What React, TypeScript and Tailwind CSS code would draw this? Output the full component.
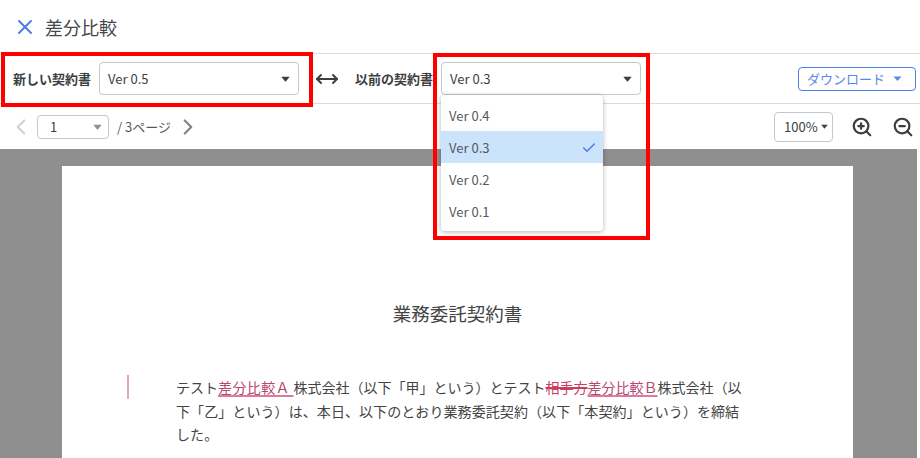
import { ChevronLeft, ChevronRight, MoveHorizontal, X, ZoomIn, ZoomOut, Check } from 'lucide-react';

const Caret = ({ className }: { className: string }) => (
  <svg viewBox="0 0 10 6" className={className}>
    <path d="M0.3 0.5h9.4L5.6 5.4a.8.8 0 0 1-1.2 0z" fill="currentColor" />
  </svg>
);

const versions = ['Ver 0.4', 'Ver 0.3', 'Ver 0.2', 'Ver 0.1'];

const App = () => {
  return (
    <div
      className="relative flex h-[458px] w-[920px] flex-col overflow-hidden bg-white text-[#3c4043]"
      style={{ fontFamily: '"Noto Sans CJK JP", "Noto Sans", sans-serif' }}
    >
      <header className="flex h-[54px] shrink-0 items-center border-b border-[#dcdcdc] pl-[13px]">
        <X className="h-[24px] w-[24px] text-[#4a7de8]" strokeWidth={2} />
        <h1 className="ml-[8px] text-[18px] leading-none text-[#44474a]">差分比較</h1>
      </header>

      <div className="flex h-[50px] shrink-0 items-center border-b border-[#dcdcdc] pl-[13px]">
        <span className="w-[86px] text-[13px] font-bold text-[#3c3f42]">新しい契約書</span>
        <div className="flex h-[33px] w-[200px] items-center justify-between rounded-[4px] border border-[#c4c8cc] pl-[8px] pr-[8px] text-[13px]">
          Ver 0.5
          <Caret className="h-[6px] w-[9px] text-[#3c3f42]" />
        </div>
        <MoveHorizontal className="ml-[16px] h-[24px] w-[24px] text-[#3c3f42]" strokeWidth={2} />
        <span className="ml-[16px] w-[86px] text-[13px] font-bold text-[#3c3f42]">以前の契約書</span>
        <div className="flex h-[33px] w-[200px] items-center justify-between rounded-[4px] border border-[#c4c8cc] pl-[8px] pr-[8px] text-[13px]">
          Ver 0.3
          <Caret className="h-[6px] w-[9px] text-[#3c3f42]" />
        </div>
        <button className="ml-[157px] flex h-[24px] w-[118px] items-center justify-between rounded-[4px] border border-[#4a7de8] pl-[8px] pr-[13px] text-[13px] text-[#5a87ea]">
          ダウンロード
          <Caret className="h-[5px] w-[9px]" />
        </button>
      </div>

      <div className="flex h-[45px] shrink-0 items-center pl-[8px] pr-[6px]">
        <ChevronLeft className="h-[26px] w-[26px] text-[#d0d3d6]" strokeWidth={2} />
        <div className="ml-[3px] flex h-[24px] w-[72px] items-center justify-between rounded-[4px] border border-[#c4c8cc] pl-[12px] pr-[6px] text-[13px]">
          1
          <Caret className="h-[6px] w-[9px] text-[#8d9196]" />
        </div>
        <span className="ml-[8px] text-[13px] text-[#55595d]">/ 3ページ</span>
        <ChevronRight className="ml-[4px] h-[26px] w-[26px] text-[#7f8489]" strokeWidth={2} />
        <div className="ml-auto flex h-[30px] w-[59px] items-center justify-between rounded-[4px] border border-[#c4c8cc] pl-[9px] pr-[4px] text-[13px]">
          100%
          <Caret className="h-[5px] w-[7px] text-[#3c3f42]" />
        </div>
        <ZoomIn className="ml-[18px] h-[22px] w-[22px] text-[#3c3f42]" strokeWidth={2.4} />
        <ZoomOut className="ml-[19px] h-[22px] w-[22px] text-[#3c3f42]" strokeWidth={2.4} />
      </div>

      <main className="mr-[3px] flex-1 overflow-hidden bg-[#8f8f8f] pl-[62px] pt-[17px]">
        <div className="h-[400px] w-[791px] bg-white pt-[134px] text-[#444]">
          <h2 className="text-center text-[18.5px] leading-[26px]">業務委託契約書</h2>
          <div className="mt-[49px] flex">
            <div className="ml-[65px] h-[24px] w-[1.5px] bg-[#e3a5b9]" />
            <div className="ml-[47.5px] whitespace-nowrap pt-[1px] text-[14px] leading-[23.5px]">
              <p>
                テスト
                <span className="tracking-[0.4px] text-[#b8456f] underline decoration-[#d87c9c] decoration-2 underline-offset-2">差分比較Ａ </span>
                株式会社（以下「甲」という）とテスト
                <span className="text-[#c9405f] line-through decoration-[#c9405f] decoration-[1.5px]">相手方</span>
                <span className="text-[#b8456f] underline decoration-[#d87c9c] decoration-2 underline-offset-2">差分比較Ｂ</span>
                株式会社（以
              </p>
              <p className="tracking-[0.08px]">下「乙」という）は、本日、以下のとおり業務委託契約（以下「本契約」という）を締結</p>
              <p className="tracking-[0.08px]">した。</p>
            </div>
          </div>
        </div>
      </main>

      {/* dropdown */}
      <div className="absolute left-[441px] top-[95px] w-[162px] rounded-[4px] bg-white py-[4px] text-[13px] text-[#55595d] shadow-[0_1px_5px_rgba(0,0,0,0.3)]">
        {versions.map((v) => (
          <div
            key={v}
            className={`flex h-[32px] items-center justify-between pl-[8px] pr-[6px] pt-[2px] ${v === 'Ver 0.3' ? 'bg-[#cbe3fb]' : ''}`}
          >
            {v}
            {v === 'Ver 0.3' && <Check className="h-[16px] w-[16px] text-[#4a7de8]" strokeWidth={2.2} />}
          </div>
        ))}
      </div>

      {/* annotation boxes */}
      <div className="absolute left-[1px] top-[52px] h-[55px] w-[312px] border-[4px] border-[#ff0000]" />
      <div className="absolute left-[433px] top-[53px] h-[187px] w-[217px] border-[4px] border-[#ff0000]" />
    </div>
  );
};

export default App;
